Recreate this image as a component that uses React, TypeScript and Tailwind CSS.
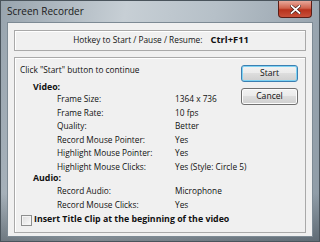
import React from "react";

const font = { fontFamily: '"Open Sans", "Noto Sans", sans-serif' };

function Row({ label, value }: { label: string; value: string }) {
  return (
    <div className="flex h-[13.5px] items-center">
      <div className="w-[118px] pl-[37px] box-content shrink-0 whitespace-nowrap">{label}</div>
      <div className="whitespace-nowrap">{value}</div>
    </div>
  );
}

export default function App() {
  return (
    <div
      className="relative w-[320px] h-[242px] overflow-hidden flex flex-col border border-[#4a545c] bg-[linear-gradient(to_bottom,transparent_80%,rgba(40,50,58,0.45)_100%),linear-gradient(100deg,#98a4ae_0%,#c7cfd5_35%,#b6c0c8_60%,#8d9aa5_100%)] text-[8.3px] text-[#111]"
      style={font}
    >
      {/* title bar */}
      <div className="h-[21px] shrink-0 flex items-center pl-[6px] text-[10px] text-[#1a1a1a]">
        Screen Recorder
      </div>
      {/* close button */}
      <div className="absolute right-[7px] top-0 w-[34px] h-[17px] rounded-b-[4px] border border-t-0 border-[#5a1e17] bg-[linear-gradient(to_bottom,#e9a89a_0%,#d0624c_45%,#b8321c_55%,#c8503a_100%)] flex items-center justify-center">
        <svg width="11" height="9" viewBox="0 0 11 9">
          <path d="M1.5 1 L9.5 8 M9.5 1 L1.5 8" stroke="#3a1510" strokeWidth="3" strokeLinecap="square" />
          <path d="M1.5 1 L9.5 8 M9.5 1 L1.5 8" stroke="#ffffff" strokeWidth="1.8" strokeLinecap="square" />
        </svg>
      </div>

      {/* client area */}
      <div className="mx-[6px] h-[215px] shrink-0 border border-[#7d8a94] bg-[#f0f0f0] px-[6px] pt-[7px] flex flex-col">
        {/* hotkey box */}
        <div className="h-[21px] border border-[#a9a9a9] shadow-[inset_1px_1px_0_#ffffff] flex items-center justify-center gap-[8px] pl-[2px]">
          <span>Hotkey to Start / Pause / Resume:</span>
          <span className="font-bold text-[9.4px]">Ctrl+F11</span>
        </div>

        {/* main panel */}
        <div className="mt-[6px] h-[176px] border border-[#a9a9a9] shadow-[inset_1px_1px_0_#ffffff] flex">
          <div className="flex-1 min-w-0 flex flex-col pl-[5px] pt-[5px]">
            <div className="h-[14px] flex items-center whitespace-nowrap">Click "Start" button to continue</div>
            <div className="mt-[5.5px] h-[10px] flex items-center pl-[13px] font-bold text-[8.8px]">Video:</div>
            <Row label="Frame Size:" value="1364 x 736" />
            <Row label="Frame Rate:" value="10 fps" />
            <Row label="Quality:" value="Better" />
            <Row label="Record Mouse Pointer:" value="Yes" />
            <Row label="Highlight Mouse Pointer:" value="Yes" />
            <Row label="Highlight Mouse Clicks:" value="Yes (Style: Circle 5)" />
            <div className="h-[11px] flex items-center pl-[13px] font-bold text-[8.8px]">Audio:</div>
            <Row label="Record Audio:" value="Microphone" />
            <Row label="Record Mouse Clicks:" value="Yes" />
            <div className="mt-[1.5px] h-[14px] flex items-center font-bold text-[8.8px] whitespace-nowrap">
              <div className="w-[11px] h-[11px] ml-[1px] border border-[#8e8f8f] bg-[linear-gradient(135deg,#dcdcdc,#fbfbfb)] shadow-[inset_0_0_0_1px_#f4f4f4]" />
              <span className="ml-[2px]">Insert Title Clip at the beginning of the video</span>
            </div>
          </div>
          <div className="w-[64px] shrink-0 flex flex-col pt-[7px] gap-[6px]">
            <button className="w-[57px] h-[17px] rounded-[3px] border border-[#3c7fb1] shadow-[inset_0_0_0_1px_#7fd3f4] bg-[linear-gradient(to_bottom,#f2f2f2_0%,#ebebeb_45%,#dddddd_50%,#cfcfcf_100%)] text-[8.6px] text-[#111] flex items-center justify-center">
              Start
            </button>
            <button className="w-[57px] h-[17px] rounded-[3px] border border-[#707070] shadow-[inset_0_0_0_1px_#fcfcfc] bg-[linear-gradient(to_bottom,#f2f2f2_0%,#ebebeb_45%,#dddddd_50%,#cfcfcf_100%)] text-[8.6px] text-[#111] flex items-center justify-center">
              Cancel
            </button>
          </div>
        </div>
      </div>
    </div>
  );
}
